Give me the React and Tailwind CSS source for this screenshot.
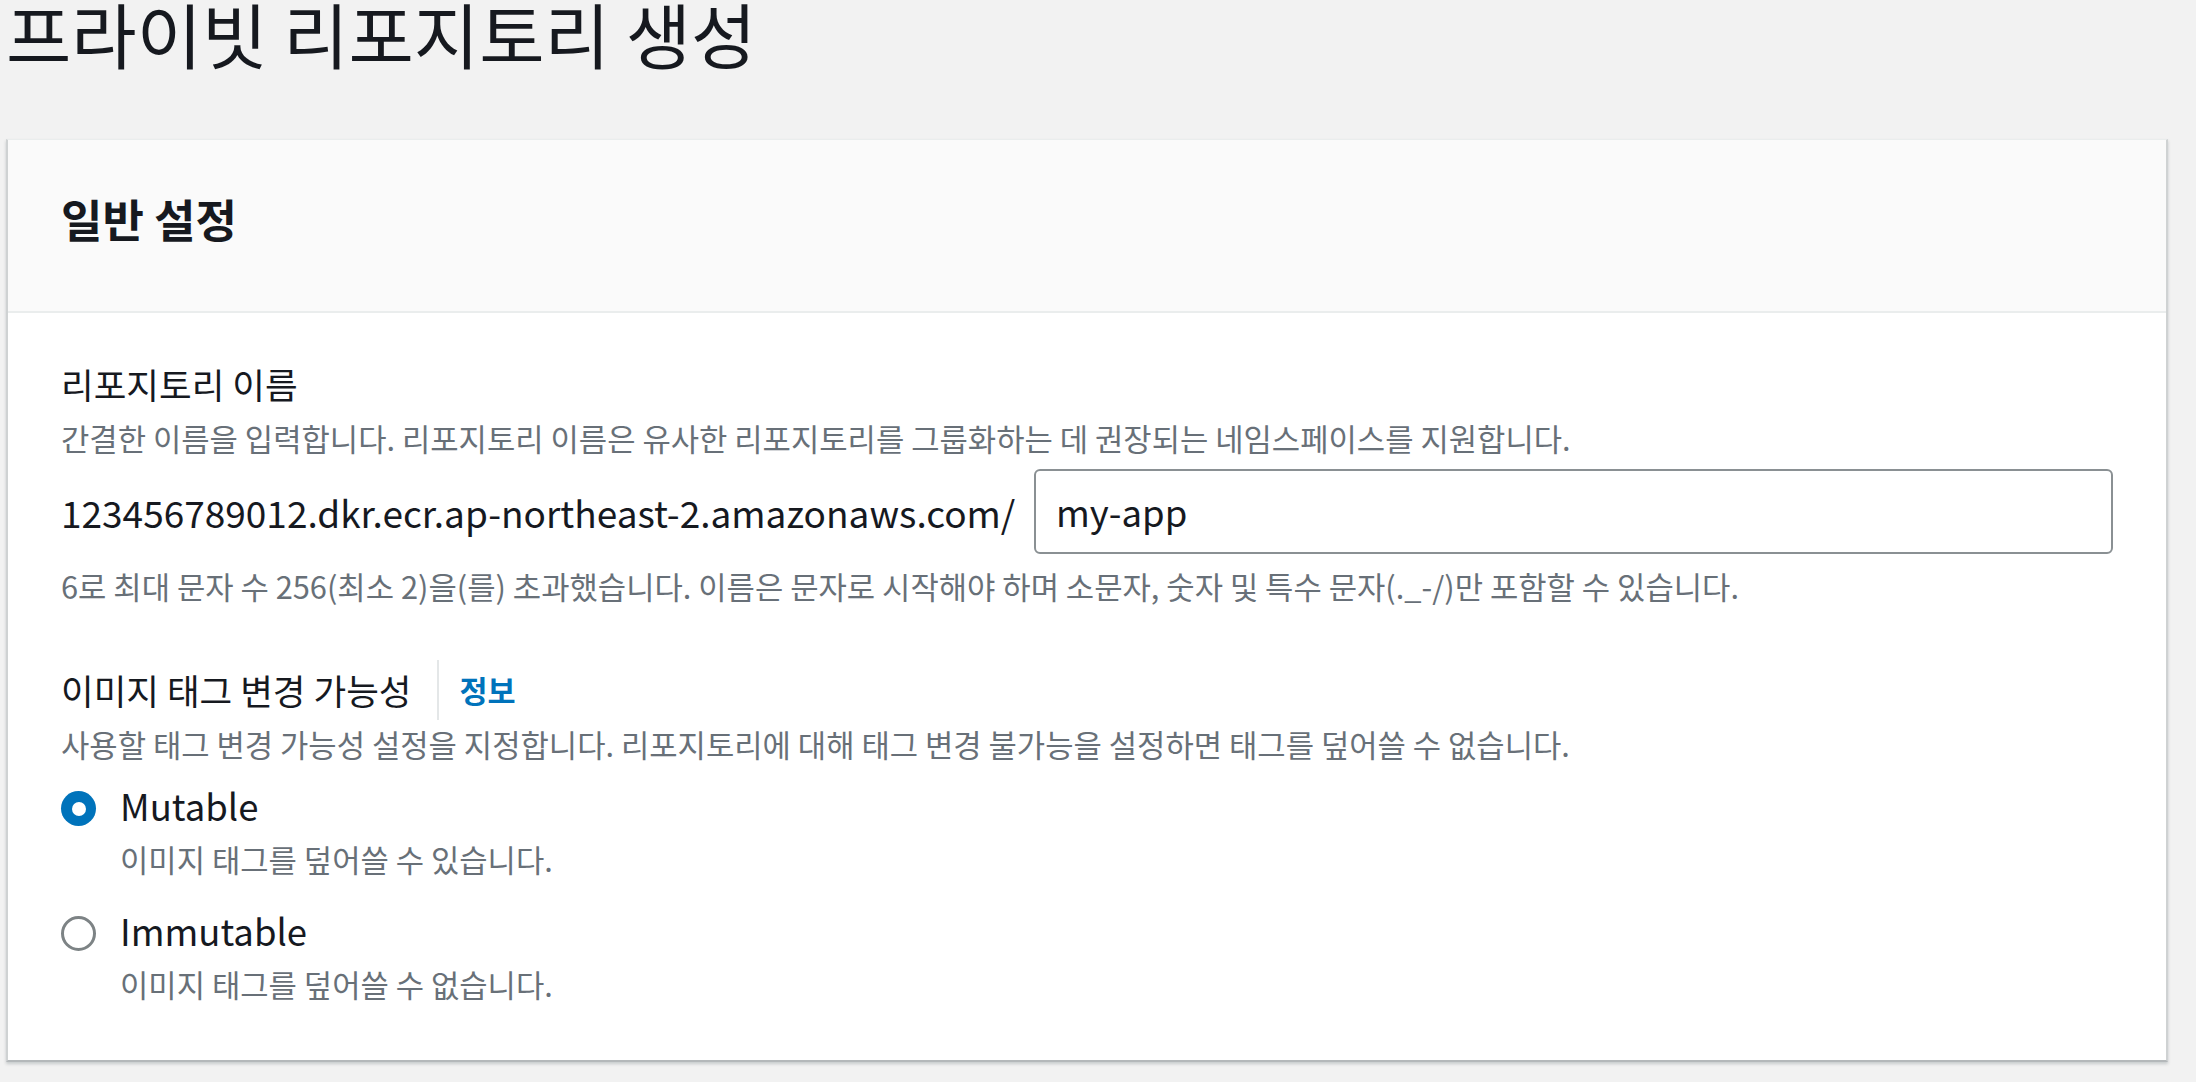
import React, { useState } from 'react';

function Radio({ checked }) {
  return checked ? (
    <span className="mt-[7px] flex h-[35px] w-[35px] shrink-0 items-center justify-center rounded-full bg-[#0073bb]">
      <span className="h-[14px] w-[14px] rounded-full bg-white" />
    </span>
  ) : (
    <span className="mt-[7px] h-[35px] w-[35px] shrink-0 rounded-full border-[3px] border-[#7d8385] bg-white" />
  );
}

function RadioOption({ label, desc, checked, onSelect, className }) {
  return (
    <div className={className} onClick={onSelect}>
      <div className="flex items-start gap-[24px]">
        <Radio checked={checked} />
        <div className="flex flex-col">
          <span className="text-[36.5px] leading-[44px] text-[#16191f]">{label}</span>
          <span className="mt-[12px] text-[30.8px] leading-[38px] text-[#687078]">{desc}</span>
        </div>
      </div>
    </div>
  );
}

export default function App() {
  const [mutability, setMutability] = useState('mutable');
  const [repoName, setRepoName] = useState('my-app');

  return (
    <div className="min-h-[1082px] bg-[#f2f2f2] pl-[6px] pr-[28px] font-['Noto_Sans_CJK_KR',sans-serif]">
      <h1 className="text-[71px] font-normal leading-[64px] text-[#16191f]">프라이빗 리포지토리 생성</h1>

      <section className="mt-[75px] border-x-2 border-t border-b-2 border-x-[#cfd2d3] border-t-[#eaeded] border-b-[#b4b8ba] bg-white shadow-[0_2px_3px_rgba(0,28,36,0.18)]">
        {/* Header */}
        <div className="border-b-2 border-[#eaeded] bg-[#fafafa] pl-[53px] pt-[52px] pb-[65px]">
          <h2 className="text-[45px] font-bold leading-[54px] text-[#16191f]">일반 설정</h2>
        </div>

        {/* Body */}
        <div className="px-[53px] pt-[49px] pb-[57px]">
          <div className="text-[35.5px] leading-[44px] text-[#16191f]">리포지토리 이름</div>
          <div className="mt-[13px] text-[30.8px] leading-[38px] text-[#687078]">
            간결한 이름을 입력합니다. 리포지토리 이름은 유사한 리포지토리를 그룹화하는 데 권장되는 네임스페이스를 지원합니다.
          </div>

          <div className="mt-[12px] flex items-center">
            <span className="w-[973px] shrink-0 whitespace-nowrap text-[37px] leading-[44px] text-[#16191f]">
              123456789012.dkr.ecr.ap-northeast-2.amazonaws.com/
            </span>
            <input
              value={repoName}
              onChange={(e) => setRepoName(e.target.value)}
              className="h-[85px] flex-1 rounded-[6px] border-2 border-[#8a9093] bg-white pl-[20px] text-[36.5px] text-[#16191f] outline-none"
            />
          </div>

          <div className="mt-[13px] text-[30.8px] leading-[38px] text-[#687078]">
            6로 최대 문자 수 256(최소 2)을(를) 초과했습니다. 이름은 문자로 시작해야 하며 소문자, 숫자 및 특수 문자(._-/)만 포함할 수 있습니다.
          </div>

          <div className="mt-[63px] flex h-[44px] items-center">
            <span className="text-[35.5px] leading-[44px] text-[#16191f]">이미지 태그 변경 가능성</span>
            <span className="ml-[26px] h-[60px] w-[2px] bg-[#e4e7e8]" />
            <a href="#" className="ml-[20px] text-[30.5px] font-bold leading-[44px] text-[#0073bb]">
              정보
            </a>
          </div>
          <div className="mt-[13px] text-[30.8px] leading-[38px] text-[#687078]">
            사용할 태그 변경 가능성 설정을 지정합니다. 리포지토리에 대해 태그 변경 불가능을 설정하면 태그를 덮어쓸 수 없습니다.
          </div>

          <RadioOption
            className="mt-[21px] cursor-pointer"
            label="Mutable"
            desc="이미지 태그를 덮어쓸 수 있습니다."
            checked={mutability === 'mutable'}
            onSelect={() => setMutability('mutable')}
          />
          <RadioOption
            className="mt-[31px] cursor-pointer"
            label="Immutable"
            desc="이미지 태그를 덮어쓸 수 없습니다."
            checked={mutability === 'immutable'}
            onSelect={() => setMutability('immutable')}
          />
        </div>
      </section>
    </div>
  );
}
